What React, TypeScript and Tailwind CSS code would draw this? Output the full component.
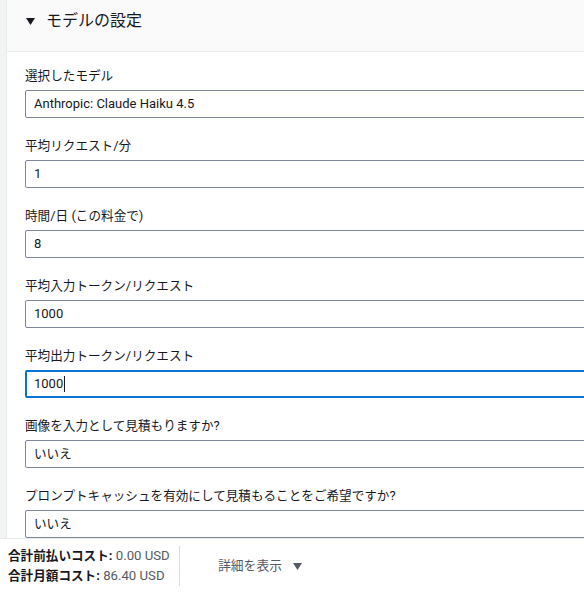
const fields: { label: string; value: string; focused?: boolean }[] = [
  { label: "選択したモデル", value: "Anthropic: Claude Haiku 4.5" },
  { label: "平均リクエスト/分", value: "1" },
  { label: "時間/日 (この料金で)", value: "8" },
  { label: "平均入力トークン/リクエスト", value: "1000" },
  { label: "平均出力トークン/リクエスト", value: "1000", focused: true },
  { label: "画像を入力として見積もりますか?", value: "いいえ" },
  {
    label: "プロンプトキャッシュを有効にして見積もることをご希望ですか?",
    value: "いいえ",
  },
];

// Japanese runs render a touch smaller than the Latin text around them
const J = ({ text }: { text: string }) => (
  <>
    {text.split(/([\u3000-\u30ff\u4e00-\u9fff\uff00-\uffef]+)/).map((part, i) =>
      i % 2 === 1 ? (
        <span key={i} className="text-[12.6px]">
          {part}
        </span>
      ) : (
        part
      )
    )}
  </>
);

const Field = ({
  label,
  value,
  focused,
}: {
  label: string;
  value: string;
  focused?: boolean;
}) => (
  <div className="flex flex-col gap-[5px]">
    <div className="h-5 whitespace-nowrap pt-px text-[13px] leading-5 text-[#16191f]">
      <J text={label} />
    </div>
    <div
      className={
        focused
          ? "flex h-[28px] w-[620px] items-center rounded-[2px] border-2 border-[#0972d3] pl-[7px] text-[13px] text-[#16191f]"
          : "flex h-[28px] w-[620px] items-center rounded-[2px] border border-[#7d8998] pl-[8px] text-[13px] text-[#16191f]"
      }
    >
      <J text={value} />
      {focused && <span className="ml-px h-[16px] w-px bg-[#16191f]" />}
    </div>
  </div>
);

export default function App() {
  return (
    <div
      className="flex h-[593px] w-[584px] flex-col overflow-hidden bg-white"
      style={{ fontFamily: 'Roboto, "Noto Sans CJK JP", sans-serif' }}
    >
      <div className="flex min-h-0 flex-1">
        <div className="w-[6px] shrink-0 bg-[#f2f3f3]" />
        <div className="flex min-w-0 flex-1 flex-col overflow-hidden border-l border-[#e9ebed]">
          <div className="flex h-[52px] shrink-0 items-start gap-[11px] border-b border-[#e9ebed] bg-[#fafafa] pl-[19px] pt-[11px]">
            <svg width="9" height="7" viewBox="0 0 9 7" className="mt-[7px]">
              <path d="M0 0 H9 L4.5 7 Z" fill="#16191f" />
            </svg>
            <span className="text-[16px] leading-[20px] text-[#16191f]">モデルの設定</span>
          </div>
          <div className="flex flex-col gap-[17px] pl-[18px] pt-[13px]">
            {fields.map((f) => (
              <Field key={f.label} {...f} />
            ))}
          </div>
        </div>
      </div>
      <div className="flex h-[55px] shrink-0 items-center border-t border-[#e9ebed] bg-white">
        <div className="flex w-[179px] flex-col whitespace-nowrap pl-[8px] text-[13.2px] leading-5 text-[#545b64]">
          <div>
            <span className="font-bold text-[#16191f]">
              <J text="合計前払いコスト" />:
            </span>{" "}
            0.00 USD
          </div>
          <div>
            <span className="font-bold text-[#16191f]">
              <J text="合計月額コスト" />:
            </span>{" "}
            86.40 USD
          </div>
        </div>
        <div className="h-[40px] w-px bg-[#d5dbdb]" />
        <div className="flex items-center gap-[11px] pl-[38px] text-[12.8px] text-[#545b64]">
          <span>詳細を表示</span>
          <svg width="9" height="7" viewBox="0 0 9 7">
            <path d="M0 0 H9 L4.5 7 Z" fill="#545b64" />
          </svg>
        </div>
      </div>
    </div>
  );
}
